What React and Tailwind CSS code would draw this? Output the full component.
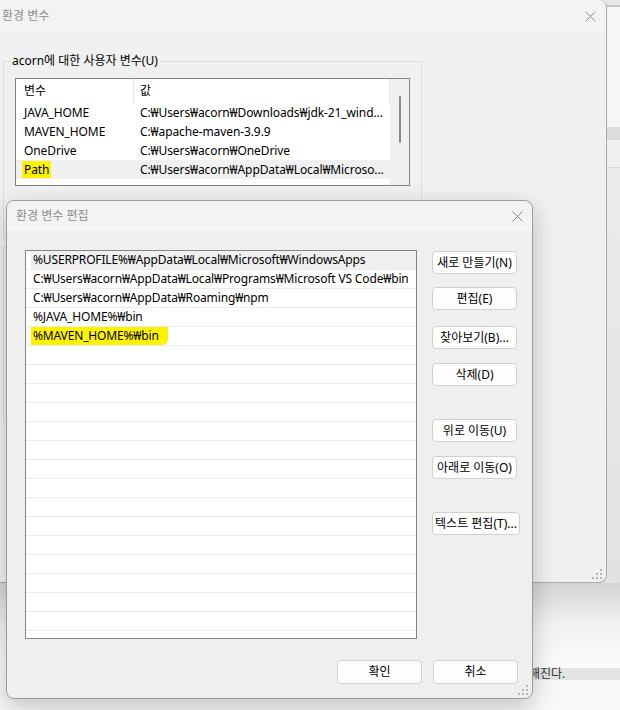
import React from 'react';

const CloseIcon = () => (
  <svg width="11" height="11" viewBox="0 0 11 11">
    <path d="M0.5 0.5L10.5 10.5M10.5 0.5L0.5 10.5" stroke="#8a8a8a" strokeWidth="1" />
  </svg>
);

const Grip = () => (
  <svg width="10" height="10" viewBox="0 0 10 10" fill="#b4b4b4">
    <rect x="8" y="0" width="2" height="2" />
    <rect x="4" y="4" width="2" height="2" />
    <rect x="8" y="4" width="2" height="2" />
    <rect x="0" y="8" width="2" height="2" />
    <rect x="4" y="8" width="2" height="2" />
    <rect x="8" y="8" width="2" height="2" />
  </svg>
);

const userVars = [
  ['JAVA_HOME', 'C:₩Users₩acorn₩Downloads₩jdk-21_wind...'],
  ['MAVEN_HOME', 'C:₩apache-maven-3.9.9'],
  ['OneDrive', 'C:₩Users₩acorn₩OneDrive'],
  ['Path', 'C:₩Users₩acorn₩AppData₩Local₩Microso...'],
];

const pathItems = [
  '%USERPROFILE%₩AppData₩Local₩Microsoft₩WindowsApps',
  'C:₩Users₩acorn₩AppData₩Local₩Programs₩Microsoft VS Code₩bin',
  'C:₩Users₩acorn₩AppData₩Roaming₩npm',
  '%JAVA_HOME%₩bin',
  '%MAVEN_HOME%₩bin',
];

const Btn = ({ children, className = '' }) => (
  <button
    className={`h-[23px] w-[85px] rounded-[4px] border border-[#d0d0d0] bg-[#fdfdfd] text-[12px] text-black flex items-center justify-center whitespace-nowrap ${className}`}
  >
    {children}
  </button>
);

export default function App() {
  const rows = Array.from({ length: 21 }, (_, i) => pathItems[i] || '');

  return (
    <div className="relative w-[620px] h-[710px] overflow-hidden bg-[#f8f8f8] font-['Noto_Sans','Noto_Sans_CJK_KR',sans-serif] text-[12px] text-black">
      {/* desktop behind: right strip */}
      <div className="absolute right-0 top-0 w-[20px] h-[583px] flex flex-col">
        <div className="h-[5px] bg-[#e6e6e6]" />
        <div className="h-[2px] bg-[#c4c4c4]" />
        <div className="h-[120px] bg-[#f6f6f6]" />
        <div className="h-[13px] bg-[#dcdcdc]" />
        <div className="h-[28px] bg-[#f0f0f0] border-b border-[#d8d8d8]" />
        <div className="flex-1 bg-gradient-to-b from-[#ebebeb] to-[#e2e2e2]" />
      </div>
      {/* desktop behind: bottom */}
      <div className="absolute left-0 top-[583px] w-[620px] h-[85px] bg-gradient-to-b from-[#d4d4d4] via-[#f2f2f2] to-[#fbfbfb]" />
      <div className="absolute left-[518px] top-[668px] w-[102px] h-[12px] bg-[#e4e4e4] flex items-center pl-[11px] text-[12px] leading-none text-[#333]">
        해진다.
      </div>

      {/* 환경 변수 window */}
      <div className="absolute left-[-8px] top-0 w-[615px] h-[583px] bg-[#f0f0f0] rounded-tr-[8px] rounded-br-[8px] border-r border-b border-[#a9a9a9] flex flex-col">
        <div className="h-[32px] shrink-0 flex items-center justify-between pl-[10px] pr-[10px] bg-[#f3f3f3] rounded-tr-[8px] text-[#8d8d8d]">
          <span>환경 변수</span>
          <CloseIcon />
        </div>
        <fieldset className="ml-[11px] mt-[21px] w-[417px] h-[185px] border border-[#dcdcdc] px-[11px]">
          <legend className="-ml-[5px] px-[2px] leading-[16px]">acorn에 대한 사용자 변수(U)</legend>
          <div className="mt-[9px] w-[395px] h-[108px] border border-[#838383] bg-white flex">
            <div className="w-[374px] flex flex-col">
              <div className="h-[24px] shrink-0 flex">
                <div className="w-[118px] pl-[8px] border-r border-[#e5e5e5] flex items-center">변수</div>
                <div className="flex-1 pl-[6px] border-r border-[#e5e5e5] flex items-center">값</div>
              </div>
              {userVars.map(([name, value]) => (
                <div
                  key={name}
                  className={`h-[19px] shrink-0 flex items-center tracking-[-0.1px] ${name === 'Path' ? 'bg-[#f0f0f0]' : ''}`}
                >
                  <div className="w-[118px] pl-[6px]">
                    <span className={name === 'Path' ? 'bg-[#fff200] px-[2px]' : 'px-[2px]'}>{name}</span>
                  </div>
                  <div className="flex-1 pl-[6px] whitespace-nowrap">{value}</div>
                </div>
              ))}
            </div>
            <div className="flex-1 bg-[#f0f0f0] flex justify-center pt-[17px]">
              <div className="w-[2px] h-[47px] rounded-full bg-[#8a8a8a]" />
            </div>
          </div>
        </fieldset>
        <div className="ml-[11px] mt-[9px] w-[500px] h-[175px] border border-[#dcdcdc]" />
        <div className="mt-auto self-end mr-[4px] mb-[3px]">
          <Grip />
        </div>
      </div>

      {/* 환경 변수 편집 dialog */}
      <div className="absolute left-[6px] top-[200px] w-[527px] h-[499px] rounded-[8px] border border-[#9c9c9c] bg-[#efefef] shadow-[0_8px_24px_rgba(0,0,0,0.22)] flex flex-col">
        <div className="h-[30px] shrink-0 flex items-center justify-between pl-[9px] pr-[9px] bg-[#f3f3f3] rounded-t-[8px] text-[#8d8d8d]">
          <span>환경 변수 편집</span>
          <CloseIcon />
        </div>
        <div className="flex mt-[19px]">
          <div className="ml-[18px] w-[392px] h-[389px] border border-[#858585] bg-white overflow-hidden">
            {rows.map((text, i) => (
              <div key={i} className="h-[19px] border-b border-[#ececec] flex">
                <div
                  className={`ml-[5px] flex-1 h-full flex items-center pl-[2px] whitespace-nowrap tracking-[-0.15px] ${i === 0 ? 'bg-[#f0f0f0]' : ''}`}
                >
                  {text === '%MAVEN_HOME%₩bin' ? (
                    <span className="bg-[#fff200] -ml-[2px] pl-[2px] pr-[9px] h-[18px] flex items-center rounded-br-[6px]">
                      {text}
                    </span>
                  ) : (
                    text
                  )}
                </div>
              </div>
            ))}
          </div>
          <div className="ml-[15px] flex flex-col">
            <Btn className="mt-px">새로 만들기(N)</Btn>
            <Btn className="mt-[13px]">편집(E)</Btn>
            <Btn className="mt-[16px]">찾아보기(B)...</Btn>
            <Btn className="mt-[14px]">삭제(D)</Btn>
            <Btn className="mt-[33px]">위로 이동(U)</Btn>
            <Btn className="mt-[14px]">아래로 이동(O)</Btn>
            <Btn className="mt-[33px] w-[88px]">텍스트 편집(T)...</Btn>
          </div>
        </div>
        <div className="mt-[21px] flex justify-end gap-[11px] pr-[14px]">
          <Btn className="w-[84px] h-[24px]">확인</Btn>
          <Btn className="w-[84px] h-[24px]">취소</Btn>
        </div>
        <div className="mt-auto self-end mr-[4px] mb-[3px]">
          <Grip />
        </div>
      </div>
    </div>
  );
}
